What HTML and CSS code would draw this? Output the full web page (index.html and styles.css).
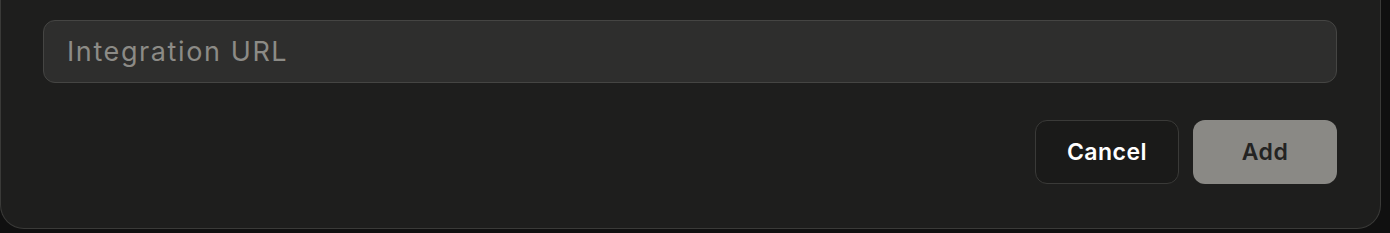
FILE: index.html
```html
<!DOCTYPE html>
<html lang="en">

<head>
    <meta charset="UTF-8">
    <meta name="viewport" content="width=device-width, initial-scale=1.0">
    <title>Add integration</title>
    <link rel="stylesheet" href="styles.css">
</head>

<body>
    <div class="panel">
        <input class="url_input" type="text" placeholder="Integration URL">
        <div class="actions">
            <button class="btn btn_cancel">Cancel</button>
            <button class="btn btn_add">Add</button>
        </div>
    </div>
</body>
</html>
```

FILE: styles.css
```css
* {
    box-sizing: border-box;
}

body {
    margin: 0;
    background-color: #101010;
    font-family: "Inter", "Noto Sans", sans-serif;
}

.panel {
    width: 1381px;
    height: 229px;
    background-color: #1e1e1d;
    border: 1px solid #3a3a38;
    border-top: none;
    border-radius: 0 0 24px 24px;
    padding: 20px 43px 0 42px;
    display: flex;
    flex-direction: column;
}

.url_input {
    height: 63px;
    width: 100%;
    background-color: #2e2e2d;
    border: 1px solid #454543;
    border-radius: 12px;
    padding: 0 23px;
    font-family: inherit;
    font-size: 27px;
    letter-spacing: 1.6px;
    color: #e8e8e4;
    outline: none;
}

.url_input::placeholder {
    color: #8c8b86;
}

.actions {
    display: flex;
    justify-content: flex-end;
    gap: 14px;
    margin-top: 37px;
}

.btn {
    width: 144px;
    height: 64px;
    border-radius: 12px;
    font-family: inherit;
    font-size: 23px;
    font-weight: 600;
    letter-spacing: 0.5px;
    cursor: pointer;
}

.btn_cancel {
    background-color: #1a1a19;
    border: 1px solid #3a3a38;
    color: #ffffff;
}

.btn_add {
    background-color: #8a8985;
    border: none;
    color: #232322;
}
```
